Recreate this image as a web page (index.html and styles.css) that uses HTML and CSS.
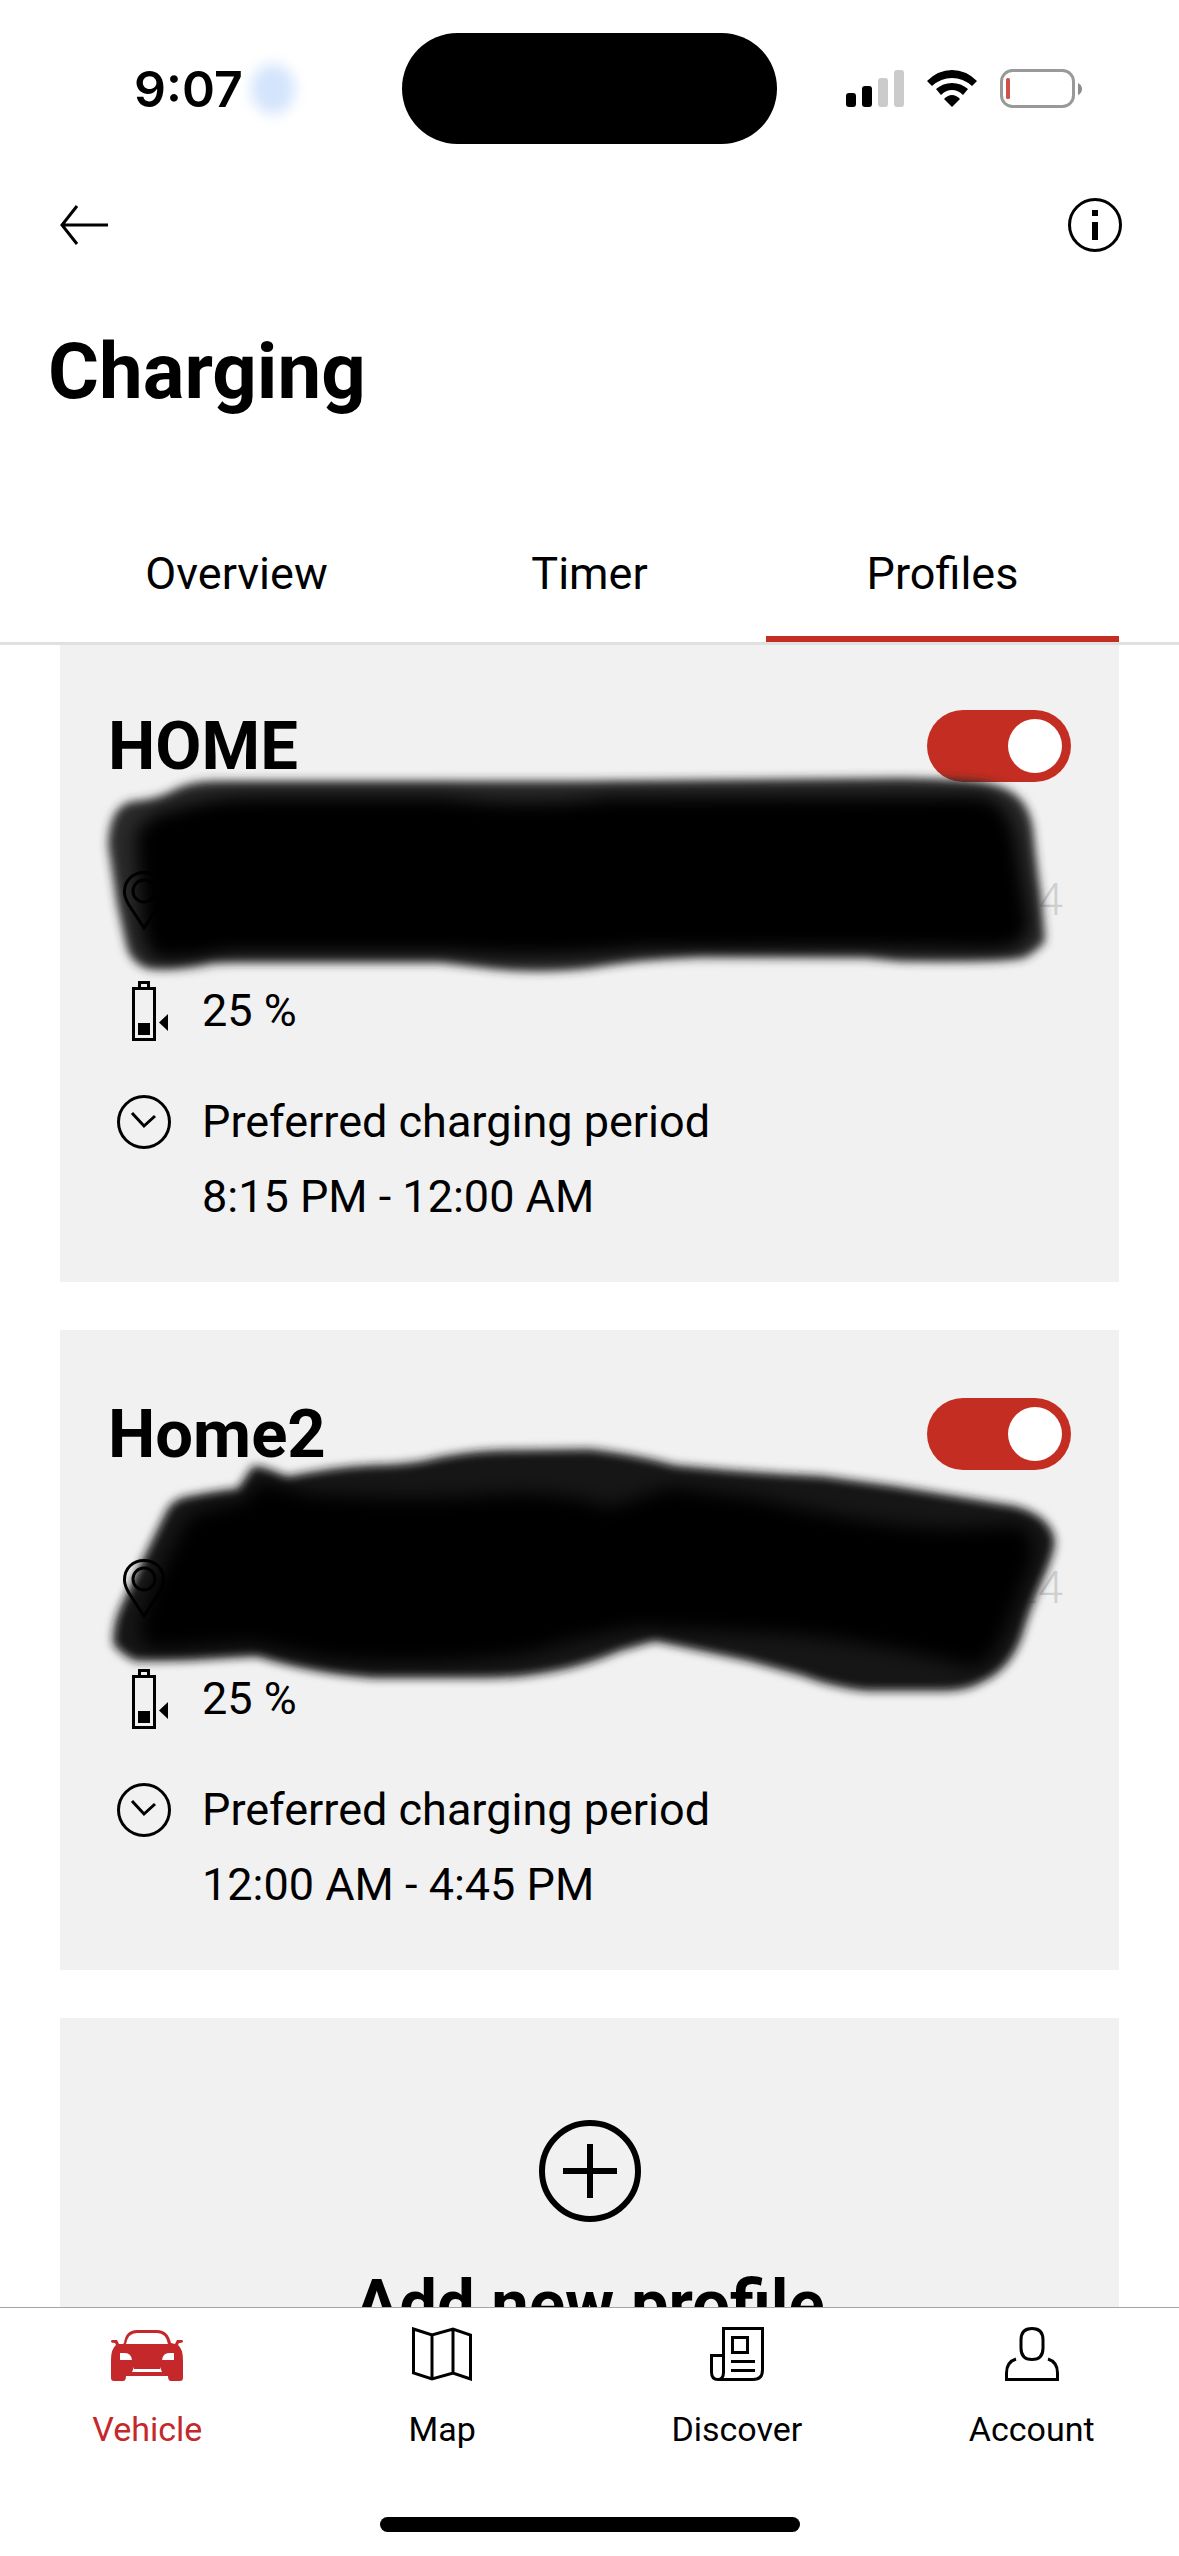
FILE: index.html
```html
<!DOCTYPE html>
<html lang="en">

<head>
    <meta charset="UTF-8">
    <meta name="viewport" content="width=device-width, initial-scale=1.0">
    <title>Charging</title>
    <link rel="stylesheet" href="styles.css">
</head>

<body>
    <div class="app">
        <div class="status_bar">
            <div class="status_left">
                <span class="time">9:07</span>
                <span class="blue_dot"></span>
            </div>
            <div class="island"></div>
            <div class="status_right">
                <svg width="58" height="38" viewBox="0 0 58 38">
                    <rect x="0" y="23" width="10" height="14" rx="3"/>
                    <rect x="16" y="16" width="10" height="21" rx="3"/>
                    <rect x="32" y="8" width="10" height="29" rx="3" fill="#cbcbcb"/>
                    <rect x="48" y="0" width="10" height="37" rx="3" fill="#cbcbcb"/>
                </svg>
                <svg width="50" height="38" viewBox="0 0 50 38">
                    <path d="M0 11 Q11 0 25 0 Q39 0 50 11 L45 16 Q36 8 25 8 Q14 8 5 16 Z"/>
                    <path d="M9 19 Q16 13 25 13 Q34 13 41 19 L36 25 Q31 20 25 20 Q19 20 14 25 Z"/>
                    <path d="M17 29 Q21 25 25 25 Q29 25 33 29 L25 37 Z"/>
                </svg>
                <svg width="82" height="40" viewBox="0 0 82 40">
                    <rect x="1.5" y="1.5" width="72" height="36" rx="11" fill="none" stroke="#999" stroke-width="3"/>
                    <rect x="6" y="9" width="4" height="21" rx="1.5" fill="#d0504a"/>
                    <path d="M78 14 Q82 16 82 20 Q82 24 78 26 Z" fill="#8c8c8c"/>
                </svg>
            </div>
        </div>

        <header class="top_bar">
            <button type="button" class="icon_btn" aria-label="Back">
                <svg width="48" height="42" viewBox="0 0 48 42" fill="none" stroke="#000" stroke-width="3">
                    <path d="M48 21 H2 M17 2 L2 21 L17 40"/>
                </svg>
            </button>
            <button type="button" class="icon_btn" aria-label="Information">
                <svg width="54" height="54" viewBox="0 0 54 54">
                    <circle cx="27" cy="27" r="25.5" fill="none" stroke="#000" stroke-width="3"/>
                    <path d="M24 12 h6 v6 h-6 Z M24 24 h6 v18 h-6 Z"/>
                </svg>
            </button>
        </header>

        <h1>Charging</h1>

        <div class="tabs" role="tablist">
            <button type="button" role="tab">Overview</button>
            <button type="button" role="tab">Timer</button>
            <button type="button" role="tab" class="on" aria-selected="true">Profiles</button>
        </div>

        <main class="profiles">
            <section class="card">
                <div class="card_head">
                    <h2><label for="profile1">HOME</label></h2>
                    <input type="checkbox" id="profile1" class="toggle" checked>
                </div>
                <ul>
                    <li>
                        <svg class="pin" width="72" height="75" viewBox="0 0 72 75" fill="none" stroke="#000" stroke-width="3">
                            <path d="M36 66 L21 43 C18 38 16.500 34 16.500 30 C16.500 18 25 10.500 36 10.500 C47 10.500 55.500 18 55.500 30 C55.500 34 54 38 51 43 Z"/>
                            <circle cx="36" cy="29" r="11"/>
                        </svg>
                        <p class="faded">24</p>
                    </li>
                    <li>
                        <svg width="72" height="75" viewBox="0 0 72 75">
                            <path d="M25.500 15.500 H46.500 V66.500 H25.500 Z M31.500 15.500 V9.500 H40.500 V15.500" fill="none" stroke="#000" stroke-width="3"/>
                            <path d="M30 50 h12 v12 h-12 Z M60 41 V58 L51 49.500 Z"/>
                        </svg>
                        <p>25 %</p>
                    </li>
                    <li>
                        <svg width="72" height="75" viewBox="0 0 72 75" fill="none" stroke="#000" stroke-width="3">
                            <circle cx="36" cy="38" r="25.500"/>
                            <path d="M24 29 L36 42 L47 32"/>
                        </svg>
                        <p>Preferred charging period<br>8:15 PM - 12:00 AM</p>
                    </li>
                </ul>
                <svg class="scribble" viewBox="60 643 1059 640">
                    <defs>
                        <filter id="soft" x="-10%" y="-20%" width="120%" height="140%">
                            <feGaussianBlur stdDeviation="5"/>
                        </filter>
                        <filter id="softer" x="-10%" y="-20%" width="120%" height="140%">
                            <feGaussianBlur stdDeviation="9"/>
                        </filter>
                    </defs>
                    <path filter="url(#soft)" fill="#2b2b2b" d="M108 845 Q110 804 135 802 Q158 800 172 792 Q190 782 213 782 L590 782 L900 779 Q970 780 990 785 Q1028 792 1033 830 Q1037 870 1041 897 L1045 940 Q1046 945 1026 958 Q1015 963 900 962 L866 958 L700 957 Q640 960 590 969 Q540 975 495 970 L440 963 L213 963 Q180 971 150 970 Q130 965 126 945 L117 905 Z"/>
                    <path filter="url(#softer)" d="M135 838 Q140 816 180 808 Q215 797 260 797 L440 797 Q530 808 610 797 L980 796 Q1012 802 1018 850 L1030 925 Q1030 946 1000 952 L860 950 L640 951 Q540 962 450 954 L230 954 Q180 964 155 960 Q143 950 141 925 Z"/>
                </svg>
            </section>

            <section class="card">
                <div class="card_head">
                    <h2><label for="profile2">Home2</label></h2>
                    <input type="checkbox" id="profile2" class="toggle" checked>
                </div>
                <ul>
                    <li>
                        <svg class="pin" width="72" height="75" viewBox="0 0 72 75" fill="none" stroke="#000" stroke-width="3">
                            <path d="M36 66 L21 43 C18 38 16.500 34 16.500 30 C16.500 18 25 10.500 36 10.500 C47 10.500 55.500 18 55.500 30 C55.500 34 54 38 51 43 Z"/>
                            <circle cx="36" cy="29" r="11"/>
                        </svg>
                        <p class="faded">24</p>
                    </li>
                    <li>
                        <svg width="72" height="75" viewBox="0 0 72 75">
                            <path d="M25.500 15.500 H46.500 V66.500 H25.500 Z M31.500 15.500 V9.500 H40.500 V15.500" fill="none" stroke="#000" stroke-width="3"/>
                            <path d="M30 50 h12 v12 h-12 Z M60 41 V58 L51 49.500 Z"/>
                        </svg>
                        <p>25 %</p>
                    </li>
                    <li>
                        <svg width="72" height="75" viewBox="0 0 72 75" fill="none" stroke="#000" stroke-width="3">
                            <circle cx="36" cy="38" r="25.500"/>
                            <path d="M24 29 L36 42 L47 32"/>
                        </svg>
                        <p>Preferred charging period<br>12:00 AM - 4:45 PM</p>
                    </li>
                </ul>
                <svg class="scribble" viewBox="60 1331 1059 640">
                    <path filter="url(#soft)" fill="#161616" d="M113 1645 Q113 1622 122 1605 L142 1562 L165 1515 Q172 1499 190 1497 Q220 1491 238 1490 L252 1468 Q256 1464 287 1478 Q330 1468 373 1466 Q410 1466 440 1458 Q480 1450 520 1451 L590 1450 Q640 1456 674 1466 Q750 1474 822 1477 L895 1487 L1015 1507 Q1052 1517 1055 1543 Q1054 1555 1043 1580 Q1032 1605 1025 1627 Q1014 1670 980 1684 Q966 1692 940 1692 L866 1692 Q830 1688 803 1677 L748 1662 L655 1642 L620 1652 Q560 1678 490 1679 L373 1679 Q310 1674 257 1657 L190 1661 L136 1662 Q124 1658 113 1645 Z"/>
                    <path filter="url(#softer)" d="M140 1632 Q142 1610 160 1575 L186 1522 Q196 1510 240 1504 L262 1482 L310 1495 Q420 1502 500 1495 Q560 1492 610 1508 L670 1488 L760 1500 Q900 1535 985 1528 L1020 1526 Q1040 1540 1030 1568 L1006 1630 Q990 1668 970 1668 Q900 1648 800 1636 L640 1628 Q580 1638 530 1654 Q440 1668 330 1660 L250 1644 L160 1650 Q140 1650 140 1632 Z"/>
                </svg>
            </section>

            <button type="button" class="card add_card">
                <svg width="102" height="102" viewBox="0 0 102 102" fill="none" stroke="#000" stroke-width="6">
                    <circle cx="51" cy="51" r="48"/>
                    <path d="M51 24 V78 M24 51 H78"/>
                </svg>
                <span>Add new profile</span>
            </button>
        </main>

        <nav class="bottom_nav">
            <ul>
                <li>
                    <a href="#" class="on">
                        <svg width="72" height="54" viewBox="0 0 72 54" fill="#c4282b">
                            <path fill-rule="evenodd" d="M13 19 C14 11 18 6 26 6 H46 C54 6 58 11 60 19 L64 20 L66 16 H71 Q72 16 72 18 Q71 19 68 19 L67 21 Q72 25 72 36 V54 Q72 57 69 57 H60 Q57 57 57 52 H15 Q15 57 12 57 H3 Q0 57 0 54 V36 Q0 25 5 21 L4 19 Q1 19 0 18 Q0 16 1 16 H6 L8 20 L12 20 Z M15 20 H57 Q55 9 46 9 H26 Q17 9 15 20 Z M9 29 V36 H21 Q20 29 14 29 Z M63 29 V36 H51 Q52 29 58 29 Z M23 43 L21 48 H51 L49 43 V45 H23 Z" transform="translate(0 -3)"/>
                        </svg>
                        <span>Vehicle</span>
                    </a>
                </li>
                <li>
                    <a href="#">
                        <svg width="60" height="54" viewBox="0 0 60 54" fill="none" stroke="#000" stroke-width="3">
                            <path d="M1.500 2 L20 8 L41 2 L58.500 8 V52 L41 46 L20 52 L1.500 46 Z M20 8 V52 M41 2 V46"/>
                        </svg>
                        <span>Map</span>
                    </a>
                </li>
                <li>
                    <a href="#">
                        <svg width="54" height="54" viewBox="0 0 54 54" fill="none" stroke="#000" stroke-width="3">
                            <path d="M13.500 46 V1.500 H52.500 V43 Q52.500 52.500 43 52.500 H8 Q1.500 52.500 1.500 45 V28.500 H13.500 M13.500 45 Q13.500 52.500 8 52.500"/>
                            <path d="M22.500 10.500 H37.500 V25.500 H22.500 Z M21 34.500 H45 M21 43.500 H45"/>
                        </svg>
                        <span>Discover</span>
                    </a>
                </li>
                <li>
                    <a href="#">
                        <svg width="54" height="54" viewBox="0 0 54 54" fill="none" stroke="#000" stroke-width="3">
                            <path d="M27 1.500 Q38 1.500 38 13 V21 Q38 32.500 27 32.500 Q16 32.500 16 21 V13 Q16 1.500 27 1.500 Z"/>
                            <path d="M11 32 Q1.500 35 1.500 46 V52.500 H52.500 V46 Q52.500 35 43 32"/>
                        </svg>
                        <span>Account</span>
                    </a>
                </li>
            </ul>
            <div class="home_bar"></div>
        </nav>
    </div>
</body>

</html>
```

FILE: styles.css
```css
* {
    margin: 0;
    padding: 0;
    box-sizing: border-box;
}

body {
    font-family: Roboto, "Liberation Sans", sans-serif;
    font-size: 45px;
    color: #000;
    background: #fff;
}

ul {
    list-style: none;
}

a {
    color: inherit;
    text-decoration: none;
}

button {
    border: none;
    background: none;
    font: inherit;
    color: inherit;
    cursor: pointer;
}

svg {
    display: block;
    flex-shrink: 0;
}

.app {
    display: flex;
    flex-direction: column;
    height: 100vh;
}

/* status bar */
.status_bar {
    display: grid;
    grid-template-columns: 1fr 375px 1fr;
    align-items: center;
    padding-top: 33px;
}

.status_left {
    display: flex;
    align-items: center;
    gap: 8px;
    padding-left: 134px;
}

.time {
    font-family: Inter, sans-serif;
    font-weight: 600;
    font-size: 50px;
}

.blue_dot {
    width: 44px;
    height: 50px;
    border-radius: 50%;
    background: #d3e4fc;
    filter: blur(7px);
}

.island {
    height: 111px;
    border-radius: 56px;
    background: #000;
}

.status_right {
    display: flex;
    align-items: center;
    gap: 23px;
    padding-left: 69px;
}

/* header */
.top_bar {
    display: flex;
    justify-content: space-between;
    align-items: center;
    height: 162px;
    padding: 0 57px 0 60px;
}

h1 {
    padding: 18px 48px 82px;
    font-size: 78px;
    line-height: 96px;
}

.tabs {
    position: relative;
    z-index: 1;
    display: flex;
    padding: 0 60px;
    border-bottom: 3px solid #e0e0e0;
}

.tabs button {
    flex: 1;
    height: 140px;
    padding-top: 8px;
    border-bottom: 6px solid transparent;
}

.tabs .on {
    border-color: #c42d21;
}

/* profile cards, scrolled under the tab line */
.profiles {
    display: flex;
    flex-direction: column;
    flex: 1;
    gap: 48px;
    min-height: 0;
    margin-top: -3px;
    padding: 0 60px;
    overflow: hidden;
}

.card {
    position: relative;
    flex-shrink: 0;
    padding: 68px 48px 48px;
    background: #f1f1f1;
}

.card_head {
    display: flex;
    justify-content: space-between;
    align-items: center;
    margin-bottom: 80px;
}

h2,
.add_card span {
    font-size: 67px;
    font-weight: 700;
    line-height: 72px;
}

.toggle {
    display: flex;
    justify-content: flex-end;
    width: 144px;
    height: 72px;
    padding: 9px;
    border-radius: 36px;
    background: #c42d21;
    appearance: none;
}

.toggle::before {
    content: "";
    width: 54px;
    height: 54px;
    border-radius: 50%;
    background: #fff;
}

.toggle:not(:checked) {
    justify-content: flex-start;
    background: #999;
}

.card ul {
    display: flex;
    flex-direction: column;
    gap: 36px;
}

.card li {
    display: flex;
    gap: 22px;
    line-height: 75px;
}

.card .faded {
    margin-left: auto;
    padding-right: 8px;
    font-weight: 300;
    color: #cfcfcf;
}

.scribble {
    position: absolute;
    top: 0;
    left: 0;
    width: 100%;
    pointer-events: none;
}

/* the pin shows through the marker */
.pin {
    position: relative;
    z-index: 1;
}

.add_card {
    display: flex;
    flex-direction: column;
    align-items: center;
    gap: 46px;
    padding-top: 102px;
}

/* bottom navigation */
.bottom_nav {
    padding: 19px 0 24px;
    border-top: 1px solid #a5a5a5;
    background: #fff;
}

.bottom_nav ul {
    display: flex;
    margin-bottom: 66px;
}

.bottom_nav li {
    flex: 1;
}

.bottom_nav a {
    display: flex;
    flex-direction: column;
    align-items: center;
    gap: 26px;
    font-size: 34px;
    line-height: 44px;
}

.bottom_nav .on {
    color: #c4282b;
}

.home_bar {
    width: 420px;
    height: 15px;
    margin: 0 auto;
    border-radius: 8px;
    background: #000;
}
```
